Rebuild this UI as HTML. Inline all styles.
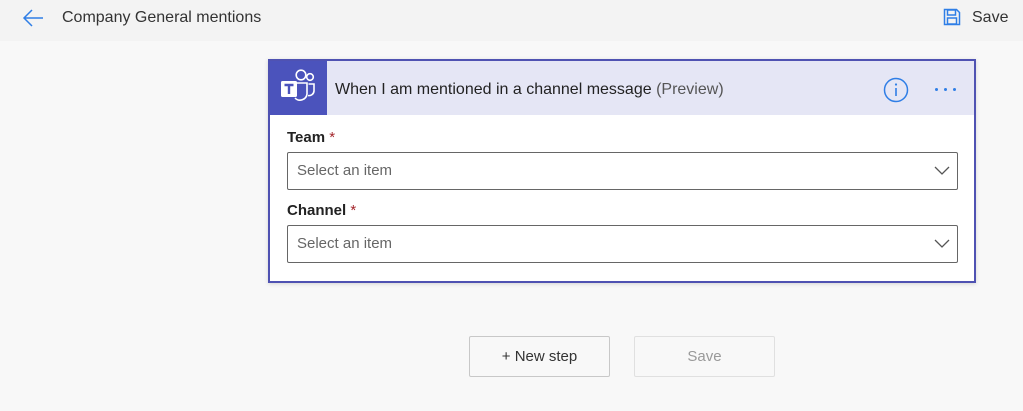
<!DOCTYPE html>
<html><head><style>
body{margin:0;width:1023px;height:411px;background:#f8f8f8;font-family:"Liberation Sans",sans-serif;position:relative;overflow:hidden}
.top{position:absolute;left:0;top:0;width:1023px;height:41px;background:#f3f3f3}
.abs{position:absolute}
.card{position:absolute;left:268px;top:59px;width:704px;height:220px;border:2px solid #4f52b2;background:#fff;box-shadow:0 1px 4px rgba(0,0,0,.15)}
.ch{position:absolute;left:0;top:0;width:704px;height:54px;background:#e5e6f5}
.ico{position:absolute;left:0;top:0;width:57px;height:54px;background:#4b53bc}
.lbl{position:absolute;left:17px;font-size:15px;font-weight:bold;color:#222}
.lbl span{color:#a4262c;font-weight:normal}
.inp{position:absolute;left:17px;border:1px solid #666;border-radius:2px;font-size:15px;color:#666;box-sizing:border-box;width:671px;height:38px;line-height:36px;padding-left:9px}
.btn{position:absolute;top:336px;height:41px;width:141px;box-sizing:border-box;border:1px solid #c8c8c8;border-radius:2px;text-align:center;line-height:39px;font-size:15px}
</style></head><body>
<div class="top"></div>
<svg class="abs" style="left:22px;top:8px" width="22" height="20" viewBox="0 0 22 20"><path d="M21 10H2M10 2L2 10l8 8" fill="none" stroke="#2f7ee6" stroke-width="1.5"/></svg>
<div class="abs" style="left:62px;top:9px;font-size:16px;color:#333">Company General mentions</div>
<svg class="abs" style="left:943px;top:8px" width="18" height="18" viewBox="0 0 18 18"><path d="M1.5 1.5h12l3 3v12h-15z" fill="none" stroke="#2f7ee6" stroke-width="1.5"/><rect x="4.5" y="2" width="8" height="5" fill="none" stroke="#2f7ee6" stroke-width="1.5"/><rect x="4.5" y="10" width="9" height="6" fill="none" stroke="#2f7ee6" stroke-width="1.5"/></svg>
<div class="abs" style="left:972px;top:9px;font-size:16px;color:#333">Save</div>
<div class="card">
<div class="ch"></div>
<div class="ico"><svg width="57" height="54" viewBox="0 0 57 54"><circle cx="40" cy="16" r="3.3" fill="none" stroke="#fff" stroke-width="1.6"/><circle cx="31" cy="14" r="4.8" fill="none" stroke="#fff" stroke-width="1.6"/><path d="M25 22h12v11a7 7 0 0 1-12 4" fill="none" stroke="#fff" stroke-width="1.6"/><path d="M38.5 23h5.5v7a5 5 0 0 1-6 4.5" fill="none" stroke="#fff" stroke-width="1.6"/><rect x="11" y="20" width="16" height="16" rx="1.5" fill="#fff"/><path d="M14.5 24h9M19 24v9" stroke="#4b53bc" stroke-width="2.4"/></svg></div>
<div class="abs" style="left:65px;top:20px;font-size:16px;color:#222">When I am mentioned in a channel message <span style="color:#555">(Preview)</span></div>
<svg class="abs" style="left:613px;top:16px" width="26" height="26" viewBox="0 0 26 26"><circle cx="13" cy="13" r="11.5" fill="none" stroke="#2f7ee6" stroke-width="1.5"/><path d="M13 11v8" stroke="#2f7ee6" stroke-width="1.6"/><circle cx="13" cy="7.5" r="1.1" fill="#2f7ee6"/></svg>
<div class="abs" style="left:665px;top:27px;width:3px;height:3px;background:#2f7ee6;border-radius:2px;box-shadow:9px 0 #2f7ee6,18px 0 #2f7ee6"></div>
<div class="lbl" style="top:68px">Team <span>*</span></div>
<div class="inp" style="top:91px">Select an item</div>
<div class="lbl" style="top:141px">Channel <span>*</span></div>
<div class="inp" style="top:164px">Select an item</div>
<svg class="abs" style="left:664px;top:105px" width="16" height="10"><path d="M1 1l7 7 7-7" fill="none" stroke="#555" stroke-width="1.3"/></svg>
<svg class="abs" style="left:664px;top:178px" width="16" height="10"><path d="M1 1l7 7 7-7" fill="none" stroke="#555" stroke-width="1.3"/></svg>
</div>
<div class="btn" style="left:469px;color:#333;background:#f8f8f8">+ New step</div>
<div class="btn" style="left:634px;color:#999;border-color:#e0e0e0">Save</div>
</body></html>
